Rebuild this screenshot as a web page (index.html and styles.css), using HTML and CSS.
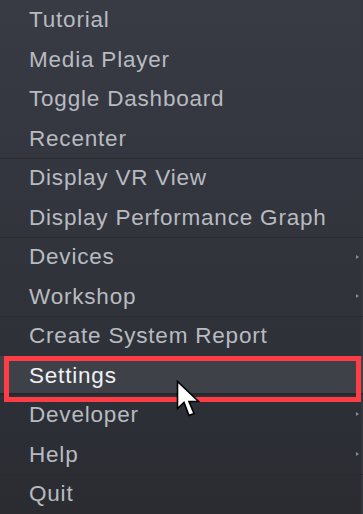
FILE: index.html
```html
<!DOCTYPE html>
<html>
<head>
<meta charset="utf-8">
<link rel="stylesheet" href="styles.css">
</head>
<body>
<div class="menu">
  <div class="item">Tutorial</div>
  <div class="item">Media Player</div>
  <div class="item">Toggle Dashboard</div>
  <div class="item">Recenter</div>
  <div class="item sep">Display VR View</div>
  <div class="item">Display Performance Graph</div>
  <div class="item sep sub">Devices</div>
  <div class="item sub">Workshop</div>
  <div class="item sep">Create System Report</div>
  <div class="item active">Settings
    <span class="callout"></span>
    <svg class="cursor" width="28" height="40" viewBox="0 0 28 40"><path d="M1.5 1.5 L1.5 28.5 L8 22.5 L13 35.5 L18 33.5 L13 21.5 L22.5 21.5 Z" fill="#fff" stroke="#000" stroke-width="1.6" stroke-linejoin="miter"/></svg>
  </div>
  <div class="item sub">Developer</div>
  <div class="item sub">Help</div>
  <div class="item sep">Quit</div>
</div>
</body>
</html>
```

FILE: styles.css
```css
html, body {
  margin: 0;
  padding: 0;
  width: 363px;
  height: 514px;
  overflow: hidden;
  background: #2b2d33;
}
.menu {
  width: 363px;
  height: 514px;
  background: linear-gradient(to bottom, #383b44 0%, #30333a 55%, #2a2c32 100%);
  box-shadow: inset -2px 0 0 #34373d;
  font-family: "Liberation Sans", Arial, sans-serif;
  font-size: 22.5px;
  letter-spacing: 0.8px;
  color: #b8bbc0;
}
.item {
  position: relative;
  height: 39.5px;
  line-height: 39.5px;
  padding-left: 29px;
  box-sizing: border-box;
  white-space: nowrap;
}
.item.sep {
  border-top: 1px solid #2a2c31;
  line-height: 38.5px;
}
.item.sub::after {
  content: "";
  position: absolute;
  right: 4px;
  top: 50%;
  margin-top: -2.5px;
  border-left: 3px solid #8a8c90;
  border-top: 2.5px solid transparent;
  border-bottom: 2.5px solid transparent;
}
.item.active {
  color: #eef1f5;
  background: #3e4147;
  box-shadow: inset 0 -2px 0 #26282d;
}
.callout {
  position: absolute;
  left: 4px;
  right: 2px;
  top: 0;
  bottom: -7px;
  border: 5px solid #ff3d46;
  pointer-events: none;
}
.cursor {
  position: absolute;
  left: 176px;
  top: 24px;
  z-index: 2;
}
```
